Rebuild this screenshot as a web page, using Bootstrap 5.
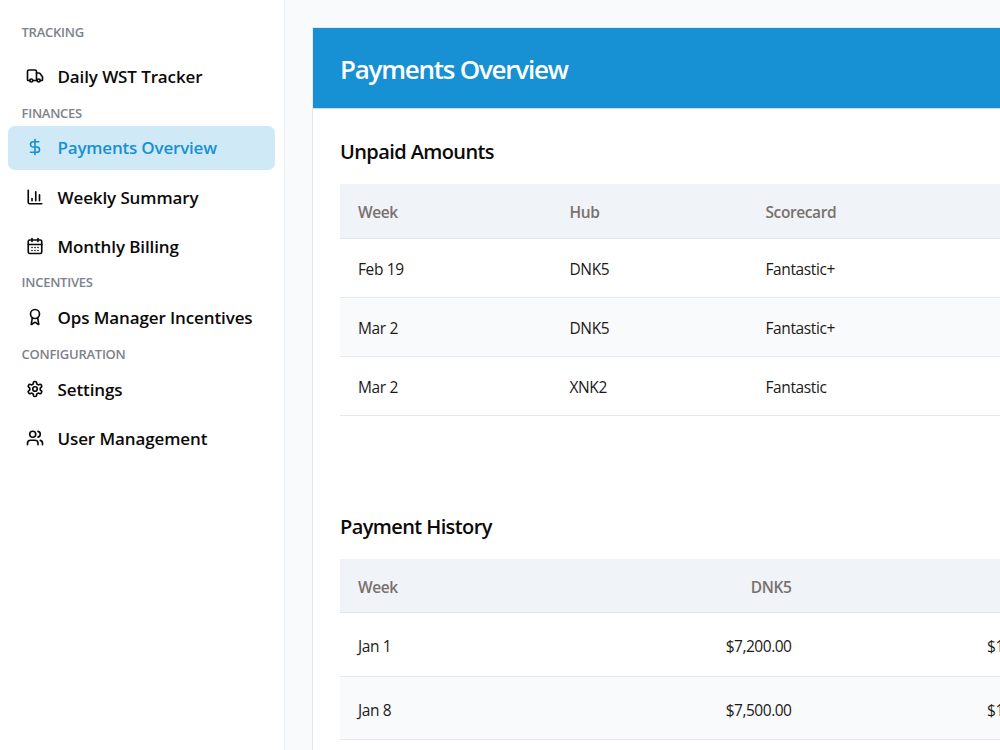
<!DOCTYPE html>
<html lang="en">
<head>
<meta charset="utf-8">
<title>Payments Overview</title>
<link href="https://cdn.jsdelivr.net/npm/bootstrap@5.3.0/dist/css/bootstrap.min.css" rel="stylesheet">
<style>
html{overflow:hidden}
body{font-family:"Open Sans","Noto Sans",sans-serif;background:#f8fafc;color:#0c0a09;width:1000px;height:750px;overflow:hidden}
.shell{width:1000px;height:750px;overflow:hidden}
.side{width:285px;height:750px;background:#fff;border-right:1px solid #eceff3;padding:18.4px 9px 0 8px}
.side-label{height:26.9px;padding-left:13.5px;font-size:13px;font-weight:600;line-height:28px;color:#7c828b;white-space:nowrap;letter-spacing:-.25px}
.side-label.first{height:35.8px}
.side .nav{gap:4.5px}
.side .nav-link{height:44.6px;padding:1px 0 0 18px;color:#0c0a09;font-size:17px;font-weight:600;line-height:24px;border-radius:7px;white-space:nowrap;gap:13.5px;letter-spacing:-.11px}
.side .nav-link.active{background:#d0e9f7;color:#1791d3;letter-spacing:-.2px}
.side svg{width:18px;height:18px;flex:none;fill:none;stroke:currentColor;stroke-width:2.2;stroke-linecap:round;stroke-linejoin:round;margin-bottom:2px}
.main{width:715px;height:750px;padding:27px 0 0 27px;overflow:hidden}
.panel{height:723px;border:1px solid #e5e7eb;border-right:0;border-bottom:0;background:#fff;overflow:hidden}
.panel-head{height:81px;background:#1791d3;color:#fff;padding:2px 27px 0;border-bottom:1px solid #cfdce6;flex:none}
.panel-head h1{font-size:26px;font-weight:600;line-height:34px;letter-spacing:-1.25px}
.panel h2{font-size:20px;font-weight:600;line-height:28px;letter-spacing:-.6px;margin:0 0 19px;padding-top:1px;height:28px}
.panel-main{padding:28px 0 0 27px}
.grid-table{table-layout:fixed;width:100%;margin:0;border-collapse:separate;border-spacing:0;font-size:15.5px;color:#1c1917}
.grid-table th,.grid-table td{padding:2px 18px 0;vertical-align:middle;border:0;border-bottom:1px solid #e4e7ec;white-space:nowrap;line-height:22px;background:transparent;box-shadow:none}
.grid-table th{background:#f0f3f8;color:#78716c;font-weight:600;border-bottom-color:#dfe5ec;letter-spacing:-.4px}
.grid-table td{color:#1c1917;letter-spacing:-.38px}
.grid-table tbody tr:nth-child(even) td{background:#f9fafc}
.unpaid th{height:55px}.unpaid td{height:59px}
.history th{height:54px}.history td{height:63.5px;padding-top:4px}
.history td.text-end{letter-spacing:-.48px}
.history .next-hub{padding-left:177.5px;padding-right:0}
.panel .block-gap{margin-top:96px}
</style>
</head>
<body>
<div class="shell d-flex">
<aside class="side flex-shrink-0">
  <div class="side-label first">TRACKING</div>
  <nav class="nav flex-column flex-nowrap">
    <a class="nav-link d-flex align-items-center"><svg viewBox="0 0 24 24"><path d="M14 18V6a2 2 0 0 0-2-2H4a2 2 0 0 0-2 2v11a1 1 0 0 0 1 1h2"/><path d="M15 18H9"/><path d="M19 18h2a1 1 0 0 0 1-1v-3.65a1 1 0 0 0-.22-.62l-3.48-4.35A1 1 0 0 0 17.520 8H14"/><circle cx="17" cy="18" r="2"/><circle cx="7" cy="18" r="2"/></svg><span>Daily WST Tracker</span></a>
  </nav>
  <div class="side-label">FINANCES</div>
  <nav class="nav flex-column flex-nowrap">
    <a class="nav-link active d-flex align-items-center"><svg viewBox="0 0 24 24"><path d="M12 2v20"/><path d="M17 5H9.500a3.500 3.500 0 0 0 0 7h5a3.500 3.500 0 0 1 0 7H6"/></svg><span>Payments Overview</span></a>
    <a class="nav-link d-flex align-items-center"><svg viewBox="0 0 24 24"><path d="M3 3v16a2 2 0 0 0 2 2h16"/><path d="M18 17V9"/><path d="M13 17V5"/><path d="M8 17v-3"/></svg><span>Weekly Summary</span></a>
    <a class="nav-link d-flex align-items-center"><svg viewBox="0 0 24 24"><path d="M8 2v4"/><path d="M16 2v4"/><rect width="18" height="18" x="3" y="4" rx="2"/><path d="M3 10h18"/><path d="M8 14h.01M12 14h.01M16 14h.01M8 18h.01M12 18h.01M16 18h.01"/></svg><span>Monthly Billing</span></a>
  </nav>
  <div class="side-label">INCENTIVES</div>
  <nav class="nav flex-column flex-nowrap">
    <a class="nav-link d-flex align-items-center"><svg viewBox="0 0 24 24"><path d="m15.477 12.890 1.515 8.526a.5.5 0 0 1-.81.470l-3.580-2.687a1 1 0 0 0-1.197 0l-3.586 2.686a.5.5 0 0 1-.81-.469l1.514-8.526"/><circle cx="12" cy="8" r="6"/></svg><span>Ops Manager Incentives</span></a>
  </nav>
  <div class="side-label">CONFIGURATION</div>
  <nav class="nav flex-column flex-nowrap">
    <a class="nav-link d-flex align-items-center"><svg viewBox="0 0 24 24"><path d="M12.220 2h-.44a2 2 0 0 0-2 2v.18a2 2 0 0 1-1 1.730l-.43.250a2 2 0 0 1-2 0l-.15-.08a2 2 0 0 0-2.730.730l-.22.380a2 2 0 0 0 .730 2.730l.15.1a2 2 0 0 1 1 1.720v.51a2 2 0 0 1-1 1.740l-.15.090a2 2 0 0 0-.730 2.730l.22.380a2 2 0 0 0 2.730.730l.15-.08a2 2 0 0 1 2 0l.43.250a2 2 0 0 1 1 1.730V20a2 2 0 0 0 2 2h.44a2 2 0 0 0 2-2v-.18a2 2 0 0 1 1-1.730l.43-.25a2 2 0 0 1 2 0l.15.080a2 2 0 0 0 2.730-.73l.22-.39a2 2 0 0 0-.73-2.730l-.15-.08a2 2 0 0 1-1-1.740v-.5a2 2 0 0 1 1-1.740l.15-.09a2 2 0 0 0 .730-2.730l-.22-.38a2 2 0 0 0-2.730-.73l-.15.080a2 2 0 0 1-2 0l-.43-.25a2 2 0 0 1-1-1.730V4a2 2 0 0 0-2-2z"/><circle cx="12" cy="12" r="3"/></svg><span>Settings</span></a>
    <a class="nav-link d-flex align-items-center"><svg viewBox="0 0 24 24"><path d="M16 21v-2a4 4 0 0 0-4-4H6a4 4 0 0 0-4 4v2"/><circle cx="9" cy="7" r="4"/><path d="M22 21v-2a4 4 0 0 0-3-3.870"/><path d="M16 3.130a4 4 0 0 1 0 7.750"/></svg><span>User Management</span></a>
  </nav>
</aside>
<main class="main flex-shrink-0">
  <section class="panel d-flex flex-column">
    <div class="panel-head d-flex align-items-center"><h1 class="m-0">Payments Overview</h1></div>
    <div class="panel-main">
      <h2>Unpaid Amounts</h2>
      <table class="table grid-table unpaid">
        <colgroup><col style="width:211.5px"><col style="width:196px"><col></colgroup>
        <thead><tr><th>Week</th><th>Hub</th><th>Scorecard</th></tr></thead>
        <tbody>
          <tr><td>Feb 19</td><td>DNK5</td><td>Fantastic+</td></tr>
          <tr><td>Mar 2</td><td>DNK5</td><td>Fantastic+</td></tr>
          <tr><td>Mar 2</td><td>XNK2</td><td>Fantastic</td></tr>
        </tbody>
      </table>
      <h2 class="block-gap">Payment History</h2>
      <table class="table grid-table history">
        <colgroup><col style="width:211.5px"><col style="width:258px"><col></colgroup>
        <thead><tr><th>Week</th><th class="text-end">DNK5</th><th></th></tr></thead>
        <tbody>
          <tr><td>Jan 1</td><td class="text-end">$7,200.00</td><td class="next-hub">$1</td></tr>
          <tr><td>Jan 8</td><td class="text-end">$7,500.00</td><td class="next-hub">$1</td></tr>
        </tbody>
      </table>
    </div>
  </section>
</main>
</div>
<script src="https://cdn.jsdelivr.net/npm/bootstrap@5.3.0/dist/js/bootstrap.bundle.min.js"></script>
</body>
</html>
